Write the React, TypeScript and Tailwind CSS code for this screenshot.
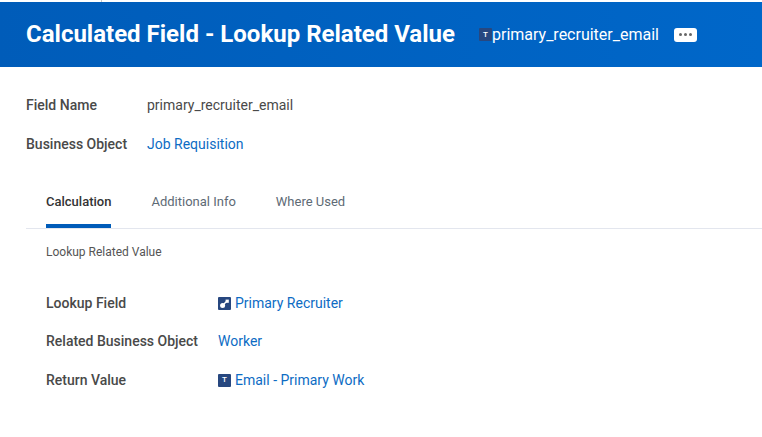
import type { ReactNode } from 'react'

const ROBOTO = "font-['Roboto',sans-serif]"

function TypeBadge() {
  return (
    <span className="flex h-[13px] w-[13px] shrink-0 items-center justify-center rounded-[1px] bg-[#27477f] text-[8px] font-medium leading-none text-white">
      T
    </span>
  )
}

function LinkBadge() {
  return (
    <svg viewBox="0 0 13 13" className="h-[13px] w-[13px] shrink-0">
      <rect width="13" height="13" rx="1" fill="#27477f" />
      <path d="M5 8 9 4" stroke="#fff" strokeWidth="1.4" />
      <circle cx="4.6" cy="8.4" r="2.5" fill="#fff" />
      <rect x="7.6" y="2.6" width="3.2" height="3.2" fill="#fff" />
    </svg>
  )
}

function Tab({ label, active }: { label: string; active?: boolean }) {
  return (
    <div
      className={`flex h-[52px] items-start border-b-4 pt-[17px] text-[13px] leading-[18px] ${
        active ? 'border-[#005cb9] font-medium text-[#333]' : 'border-transparent text-[#5e6a75]'
      }`}
    >
      {label}
    </div>
  )
}

function DetailRow({ label, children, height }: { label: string; children: ReactNode; height: string }) {
  return (
    <div className={`flex items-start ${height}`}>
      <div className="w-[172px] shrink-0 text-[14px] font-medium leading-5 text-[#494949]">{label}</div>
      <div className="flex items-center gap-1 text-[14px] leading-5 text-[#0d6cc4]">{children}</div>
    </div>
  )
}

export default function App() {
  return (
    <div className={`${ROBOTO} h-[437px] w-[762px] overflow-hidden bg-white`}>
      <div className="h-[2px] pl-[101px]">
        <div className="h-full w-px bg-[#c8c8c8]" />
      </div>
      <header className="flex h-[65px] items-center bg-gradient-to-r from-[#005cb9] to-[#0067c9] pl-[26px] text-white">
        <h1 className="pb-[2px] text-[24px] font-bold leading-8">Calculated Field - Lookup Related Value</h1>
        <div className="ml-6 flex items-center">
          <TypeBadge />
          <span className="text-[16px] leading-5">primary_recruiter_email</span>
        </div>
        <button className="ml-[15px] flex h-[14px] w-[23px] items-center justify-center gap-[2px] rounded-[3px] bg-white">
          <span className="h-[3px] w-[3px] rounded-full bg-[#666]" />
          <span className="h-[3px] w-[3px] rounded-full bg-[#666]" />
          <span className="h-[3px] w-[3px] rounded-full bg-[#666]" />
        </button>
      </header>

      <section className="px-[26px] pt-[28px]">
        <div className="flex h-[39px] items-start">
          <div className="w-[121px] shrink-0 text-[14px] font-medium leading-5 text-[#494949]">Field Name</div>
          <div className="text-[14px] leading-5 text-[#494949]">primary_recruiter_email</div>
        </div>
        <div className="flex items-start">
          <div className="w-[121px] shrink-0 text-[14px] font-medium leading-5 text-[#494949]">Business Object</div>
          <div className="text-[14px] leading-5 text-[#0d6cc4]">Job Requisition</div>
        </div>
      </section>

      <nav className="ml-[26px] mt-[22px] flex h-[53px] gap-10 border-b border-[#e3e6ee] pl-5">
        <Tab label="Calculation" active />
        <Tab label="Additional Info" />
        <Tab label="Where Used" />
      </nav>

      <main className="pl-[46px] pt-[15px]">
        <p className="text-[12px] leading-4 text-[#555]">Lookup Related Value</p>
        <div className="mt-[33px]">
          <DetailRow label="Lookup Field" height="h-[38px]">
            <LinkBadge />
            Primary Recruiter
          </DetailRow>
          <DetailRow label="Related Business Object" height="h-[39px]">
            Worker
          </DetailRow>
          <DetailRow label="Return Value" height="h-5">
            <TypeBadge />
            Email - Primary Work
          </DetailRow>
        </div>
      </main>
    </div>
  )
}
